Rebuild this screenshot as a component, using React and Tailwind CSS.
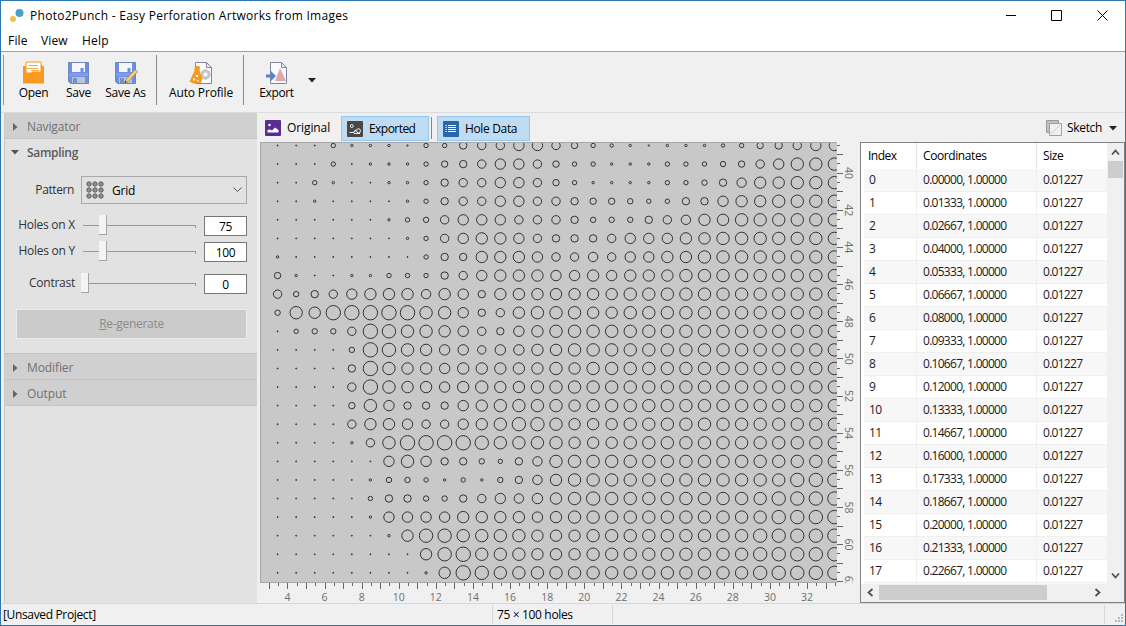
import React from "react";

const PITCH = 18.56;

// One character per hole: its diameter in pixels, in hexadecimal.
const HOLES = [
  "1115333255" + "899bb97543" + "23334578 9bb".replace(" ", ""),
  "1115133357" + "89bb975533" + "355567 9bddd".replace(" ", ""),
  "1153113358" + "99bb975333" + "35568accddd",
  "1131111358" + "99bb998776" + "5588bccdddd",
  "1111113569" + "bbb9998666" + "89accdddddd",
  "1111111359" + "bccb98889b" + "bbccddddddd",
  "3111111158" + "8cccb99a9b" + "bccdddddddd",
  "7311335558" + "9bcccbbcbc" + "ccddddddddd",
  "9689bcccac" + "b8cccccccd" + "ddddddddddd",
  "6dcfffffdd" + "b89cdddccd" + "ddddddddddd",
  "15669feddc" + "b98bcddddd" + "ddddddddddd",
  "11116fedcb" + "b9bbccdddd" + "ddddddddddd",
  "11118fdccb" + "cccccdcddd" + "ddddddddddd",
  "11119fdccb" + "cdccdddddd" + "ddddddddddd",
  "11117db888" + "bcddddcddd" + "ddddddddddd",
  "11119ccb99" + "bcdeedcccd" + "ddddddddddd",
  "111139dfff" + "feddddcccd" + "ddddddddddd",
  "111111bdb8" + "8658addddd" + "ddddddddddd",
  "1111136653" + "5368acdddd" + "ddddddddeee",
  "1111158866" + "89babcdedd" + "dddddddeeee",
  "111113bbbb" + "ccccbcdddd" + "dddddddeeee",
  "1111113cee" + "ddddcccddd" + "ddddddeeeee",
  "11111111ce" + "fdddcccddd" + "ddddddeeeee",
  "111111113c" + "fedddddddd" + "ddddddeeeee",
];

const radius = (c) => (c === "1" ? 0.5 : parseInt(c, 16) / 2 - 0.3);

function Canvas() {
  const xTicks = Array.from({ length: 62 }, (_, i) => 3 + i / 2);
  const yTicks = Array.from({ length: 48 }, (_, i) => 38.5 + i / 2);
  return (
    <svg width="600" height="461" viewBox="260 142 600 461" className="block">
      <defs>
        <clipPath id="sheet">
          <rect x="261" y="143" width="576" height="440" />
        </clipPath>
        <clipPath id="side">
          <rect x="837" y="142" width="23" height="441" />
        </clipPath>
      </defs>
      <rect x="260" y="142" width="577" height="441" fill="#a8a8a8" />
      <rect x="261" y="143" width="576" height="439" fill="#c8c8c8" />
      <g clipPath="url(#sheet)" fill="none" stroke="#333" strokeWidth="1">
        {HOLES.map((row, r) =>
          row.split("").map((c, i) => (
            <circle
              key={r + "-" + i}
              cx={277.6 + i * PITCH}
              cy={145.5 + r * 18.58}
              r={radius(c)}
              fill={c === "1" ? "#333" : "none"}
            />
          ))
        )}
      </g>
      <g fill="#666">
        {xTicks.map((v) => (
          <rect key={v} x={Math.round(287.4 + (v - 4) * PITCH)} y="583" width="1" height={v % 1 ? 3 : 6} />
        ))}
        {yTicks.map((v) => (
          <rect key={v} x="837" y={Math.round(172.6 + (v - 40) * 18.58)} width={v % 1 ? 3 : 6} height="1" />
        ))}
      </g>
      <g fill="#6e6e6e" fontFamily="'Open Sans', 'Noto Sans', sans-serif" fontSize="10.5" textAnchor="middle">
        {Array.from({ length: 15 }, (_, i) => 4 + i * 2).map((v) => (
          <text key={v} x={287.4 + (v - 4) * PITCH} y="601">{v}</text>
        ))}
        <g clipPath="url(#side)">
          {Array.from({ length: 12 }, (_, i) => 40 + i * 2).map((v) => (
            <text key={v} transform={`translate(845 ${173 + (v - 40) * 18.58}) rotate(90)`}>{v}</text>
          ))}
        </g>
      </g>
    </svg>
  );
}

const OpenIcon = () => (
  <svg width="24" height="24" viewBox="0 0 24 24">
    <path d="M1 5h3v-1h16v1h2v17H1z" fill="#f79a1e" />
    <path d="M4 1h15v11H4z" fill="#fff" stroke="#f79a1e" />
    <path d="M7 4.500h9M5 7.500h11" stroke="#f9a83c" strokeWidth="1.200" />
    <path d="M1 9h3v3h5l1.500-1.500H19V8h3v14.500H1z" fill="#f79a1e" />
    <path d="M9 9.500h8" stroke="#f9a83c" />
  </svg>
);

const Disk = () => (
  <>
    <path d="M1.500 1.500h20v21h-18l-2-2z" fill="#6f8fe0" stroke="#7088b8" />
    <path d="M5 2h13v9H5z" fill="#f4f7ff" />
    <path d="M13.500 7h3v4h-3z" fill="#6f8fe0" />
    <path d="M2 12h19v3H2z" fill="#809cea" />
    <path d="M5 16h13v6H5z" fill="#b9c4d8" />
    <path d="M6 17h4v5H6z" fill="#7890c8" />
  </>
);

const SaveIcon = () => (
  <svg width="24" height="24" viewBox="0 0 24 24"><Disk /></svg>
);

const SaveAsIcon = () => (
  <svg width="24" height="24" viewBox="0 0 24 24">
    <Disk />
    <path d="M10.500 22l2-4L21 8.500l2.500 2.200L14.500 20.500z" fill="#f6cf7d" stroke="#a08050" strokeWidth=".8" />
    <path d="M10.500 22l1-2.500 1.500 1.500z" fill="#444" />
  </svg>
);

const Page = () => (
  <path d="M6.500 1.500h11l5 5v16h-16z M17.500 1.500v5h5" fill="#fbfbff" stroke="#8088a0" />
);

const ProfileIcon = () => (
  <svg width="24" height="24" viewBox="0 0 24 24">
    <Page />
    <circle cx="16.500" cy="13.500" r="3.500" fill="none" stroke="#c4c6c8" strokeWidth="3" />
    <path d="M16.500 8v11M11 13.500h11M13 10l7 7M20 10l-7 7" stroke="#c4c6c8" strokeWidth="1.600" />
    <circle cx="16.500" cy="13.500" r="2" fill="#fff" />
    <path d="M5.500 7l1.500-2h3l1 1.500-.5 3 1.500 4 1.500 4.500-1.500 4-8 .5-3.500-2 3-6.500 2-4z" fill="#f79a1e" />
    <path d="M4 17.500h2v2H4zM7 14h2v2H7zM8 19h1.500v1.500H8z" fill="#fff" />
  </svg>
);

const ExportIcon = () => (
  <svg width="24" height="24" viewBox="0 0 24 24">
    <g transform="translate(-1 0)"><Page /></g>
    <path d="M15 7l6 13H10z" fill="#dfa9a9" />
    <path d="M1 13.500h5v-3.500l5 5-5 5v-3.500H1z" fill="#5b7fd6" />
  </svg>
);

const PictureIcon = () => (
  <svg width="16" height="16" viewBox="0 0 16 16">
    <rect width="16" height="16" rx="1" fill="#5a2d91" />
    <circle cx="4.500" cy="5" r="1.200" fill="#fff" />
    <path d="M2.500 12.500v-2.500l2.500-.5 2 1 3-3 3.500 2.500v2.500z" fill="#fff" />
  </svg>
);

const ExportedIcon = () => (
  <svg width="16" height="16" viewBox="0 0 16 16" fill="none" stroke="#eee">
    <rect width="16" height="16" rx="1" fill="#484848" stroke="none" />
    <circle cx="4.800" cy="5" r="1.500" />
    <circle cx="11.500" cy="9.800" r="2" />
    <path d="M2.500 11.500h4l2.500-2.500M7 12.500h6" strokeWidth="1.200" />
  </svg>
);

const ListIcon = () => (
  <svg width="16" height="16" viewBox="0 0 16 16">
    <rect width="16" height="16" rx="1" fill="#2b66ac" />
    <path d="M5 4.500h8M5 6.500h8M5 8.500h8M5 10.500h8M2.500 4.500h1.200M2.500 6.500h1.200M2.500 8.500h1.200M2.500 10.500h1.200" stroke="#fff" />
  </svg>
);

const Down = () => (
  <svg width="8" height="5" viewBox="0 0 8 5"><path d="M0 0h8L4 4.500z" fill="#222" /></svg>
);

const Tool = ({ icon, label, className }) => (
  <div className={"flex flex-col items-center " + className}>
    {icon}
    <span className="leading-4 whitespace-nowrap">{label}</span>
  </div>
);

const Section = ({ label }) => (
  <div className="flex h-[26px] items-center border-b border-[#c3c3c3] bg-[#d0d0d0] pt-[2px] pl-[8px] text-[#707070]">
    <svg width="5" height="8" viewBox="0 0 5 8"><path d="M0 0v8l4.500-4z" fill="#666" /></svg>
    <span className="ml-[9px] tracking-[-0.1px]">{label}</span>
  </div>
);

const SliderRow = ({ label, value, low, className }) => (
  <div className={"flex h-5 items-center " + className}>
    <span className="w-[70px] pb-[3px] text-right tracking-[-0.25px] text-[#333]">{label}</span>
    <div className={"flex h-5 items-center pb-[2px] " + (low ? "ml-[6px] w-[115px]" : "ml-[8px] w-[113px]")}>
      {!low && <div className="h-px w-[16px] bg-[#999]" />}
      <div className="h-5 w-2 border-r border-b border-[#a5a5a5] bg-[#f4f4f4]" />
      <div className="h-px flex-1 bg-[#999]" />
      <div className="mt-[2px] h-[3px] w-px bg-[#999]" />
    </div>
    <div className="ml-2 flex h-5 w-[43px] items-center justify-center border border-[#777] bg-white pt-px tracking-[-0.4px] text-black">{value}</div>
  </div>
);

const Chevron = ({ d }) => (
  <svg width="9" height="9" viewBox="0 0 9 9" fill="none" stroke="#505050" strokeWidth="1.800"><path d={d} /></svg>
);

const coordinate = (i) => (i / 75).toFixed(5) + ", 1.00000";

export default function App() {
  return (
    <div className="flex h-[626px] w-[1126px] flex-col overflow-hidden border border-[#2b78b4] bg-[#f0f0f0] font-['Open_Sans','Noto_Sans',sans-serif] text-[12px] leading-4 text-black">
      <div className="flex h-[29px] shrink-0 items-center bg-white pl-2">
        <svg width="16" height="16" viewBox="0 0 16 16">
          <circle cx="10.500" cy="5" r="4" fill="#4aa0c8" />
          <circle cx="4" cy="11" r="3" fill="#f2c14a" />
        </svg>
        <span className="ml-[5px] tracking-[0.28px] whitespace-nowrap">Photo2Punch - Easy Perforation Artworks from Images</span>
        <svg className="mr-[17px] ml-auto" width="102" height="11" viewBox="0 0 102 11" fill="none" stroke="#000">
          <path d="M0 5.500h10M45.500.5h10v10h-10zM91.500.5l10 10M101.500.5l-10 10" />
        </svg>
      </div>
      <div className="flex h-[21px] shrink-0 items-center bg-white pl-[7px]">
        <span className="w-[33px] tracking-[0.2px]">File</span>
        <span className="w-[41px] tracking-[0.1px]">View</span>
        <span className="tracking-[0.2px]">Help</span>
      </div>
      <div className="flex h-[61px] shrink-0 border-t border-[#a0a0a0] pt-[3px] pl-[2px]">
        <div className="h-[50px] w-px bg-[#999]" />
        <Tool icon={<OpenIcon />} label="Open" className="ml-[6px] w-[47px] pt-[6px] tracking-[-0.3px]" />
        <Tool icon={<SaveIcon />} label="Save" className="w-[43px] pt-[6px] tracking-[-0.2px]" />
        <Tool icon={<SaveAsIcon />} label="Save As" className="w-[51px] pt-[6px] tracking-[-0.3px]" />
        <div className="ml-[5px] h-[50px] w-px bg-[#888]" />
        <Tool icon={<ProfileIcon />} label="Auto Profile" className="ml-[10px] w-[68px] pt-[6px] tracking-[-0.15px]" />
        <div className="ml-[8px] h-[50px] w-px bg-[#888]" />
        <Tool icon={<ExportIcon />} label="Export" className="ml-[12px] w-[41px] pt-[6px] tracking-[-0.4px]" />
        <div className="mt-[23px] ml-[11px]"><Down /></div>
      </div>
      <div className="flex h-[491px] shrink-0 border-t border-[#dcdcdc]">
        <div className="ml-[3px] h-[490px] w-[253px] shrink-0 border-l border-[#c8c8c8] bg-[#e2e2e2]">
          <Section label="Navigator" />
          <div className="h-[215px] border-b border-[#c3c3c3]">
            <div className="flex h-[27px] items-center pl-[6px] text-[#5a5a5a]">
              <svg width="8" height="5" viewBox="0 0 8 5"><path d="M0 0h8L4 4.500z" fill="#555" /></svg>
              <span className="ml-[8px] font-semibold tracking-[-0.3px]">Sampling</span>
            </div>
            <div className="mt-[10px] flex items-center">
              <span className="w-[69px] text-right tracking-[-0.4px] text-[#333]">Pattern</span>
              <div className="ml-[7px] flex h-7 w-[166px] items-center border border-[#a8a8a8] pr-1 pl-[4px]">
                <svg width="18" height="18" viewBox="0 0 18 18" fill="#909090" stroke="#606060">
                  {[3, 9, 15].map((y) => [3, 9, 15].map((x) => <circle key={x + "-" + y} cx={x} cy={y} r="2.200" />))}
                </svg>
                <span className="ml-[8px] pt-px tracking-[-0.2px]">Grid</span>
                <svg className="ml-auto" width="9" height="6" viewBox="0 0 9 6" fill="none" stroke="#555"><path d="M.5.5l4 4 4-4" /></svg>
              </div>
            </div>
            <SliderRow label="Holes on X" value="75" className="mt-[12px]" />
            <SliderRow label="Holes on Y" value="100" className="mt-[6px]" />
            <SliderRow label="Contrast" value="0" low className="mt-[12px]" />
            <div className="mt-[15px] ml-[11px] flex h-[30px] w-[231px] items-center justify-center border border-[#ececec] bg-[#cbcbcb] tracking-[-0.3px] text-[#8a8a8a]">
              <span><u>R</u>e-generate</span>
            </div>
          </div>
          <Section label="Modifier" />
          <Section label="Output" />
        </div>
        <div className="ml-[3px] flex w-[600px] shrink-0 flex-col">
          <div className="flex h-[29px] shrink-0 items-center pt-[1px]">
            <div className="ml-[5px] flex w-[76px] items-center gap-[6px] tracking-[-0.1px]"><PictureIcon />Original</div>
            <div className="flex h-[25px] w-[88px] items-center gap-[6px] border border-[#95c8ee] bg-[#bfdcf3] pt-px pl-[5px] tracking-[-0.5px]"><ExportedIcon /><span className="tracking-[-0.55px]">Exported</span></div>
            <div className="ml-[2px] h-[22px] w-px bg-[#888]" />
            <div className="ml-[5px] flex h-[25px] w-[93px] items-center gap-[6px] border border-[#95c8ee] bg-[#bfdcf3] pt-px pl-[5px]"><ListIcon /><span className="tracking-[-0.35px]">Hole Data</span></div>
          </div>
          <Canvas />
        </div>
        <div className="flex w-[265px] shrink-0 flex-col">
          <div className="flex h-[29px] shrink-0 items-center justify-end pt-[1px] pr-[8px]">
            <svg width="16" height="16" viewBox="0 0 16 16">
              <path d="M.5.5h12v12H.5z" fill="#c0c0c0" stroke="#999" />
              <path d="M3.500 3.500h12v12h-12z" fill="#f0f0ee" stroke="#a0a0a0" />
              <path d="M5 14l9-9" stroke="#ccc" />
            </svg>
            <span className="mr-[7px] ml-[5px] tracking-[-0.35px]">Sketch</span>
            <Down />
          </div>
          <div className="flex h-[461px] w-[265px] flex-col border border-[#828282] bg-white">
            <div className="flex h-[441px] shrink-0">
              <div className="w-[246px] shrink-0 overflow-hidden pl-[3px]">
                <div className="flex h-[26px] items-center">
                  <div className="flex h-full w-[53px] items-center border-r border-[#e5e5e5] pl-[4px] tracking-[-0.5px]">Index</div>
                  <div className="flex h-full w-[120px] items-center border-r border-[#e5e5e5] pl-[6px] tracking-[-0.4px]">Coordinates</div>
                  <div className="pl-[6px] tracking-[-0.4px]">Size</div>
                </div>
                {Array.from({ length: 19 }, (_, i) => (
                  <div key={i} className={"flex h-[23px] items-center border-b border-[#efefef] text-[12px] tracking-[-0.72px] text-[#1a1a1a] " + (i % 2 ? "bg-white" : "bg-[#f7f7f7]")}>
                    <div className="flex h-full w-[53px] items-center border-r border-[#efefef] pl-[5px]">{i < 18 && i}</div>
                    <div className="flex h-full w-[120px] items-center border-r border-[#efefef] pl-[6px] whitespace-nowrap">{i < 18 && coordinate(i)}</div>
                    <div className="pl-[6px]">{i < 18 && "0.01227"}</div>
                  </div>
                ))}
              </div>
              <div className="flex w-[17px] flex-col items-center bg-[#f0f0f0]">
                <div className="flex h-[18px] items-center pt-px"><Chevron d="M1 6.500l3.500-4 3.500 4" /></div>
                <div className="h-[17px] w-[15px] bg-[#cdcdcd]" />
                <div className="mt-auto flex h-[17px] items-center"><Chevron d="M1 2.500l3.500 4 3.500-4" /></div>
              </div>
            </div>
            <div className="flex h-[18px] items-center bg-[#f0f0f0] pb-px">
              <div className="flex w-[18px] justify-center"><Chevron d="M6.500 1l-4 3.500 4 3.500" /></div>
              <div className="h-[15px] w-[168px] bg-[#cdcdcd]" />
              <div className="ml-[46px]"><Chevron d="M2.500 1l4 3.500-4 3.500" /></div>
            </div>
          </div>
        </div>
      </div>
      <div className="flex flex-1 items-center border-t border-[#d7d7d7] pl-[2px]">
        <span className="w-[489px] tracking-[-0.35px]">[Unsaved Project]</span>
        <div className="flex h-[19px] w-[121px] items-center border-x border-[#d7d7d7] pl-[4px] tracking-[-0.35px]">75 × 100 holes</div>
        <div className="ml-auto h-[19px] w-px bg-[#d7d7d7]" />
        <svg className="mt-[8px] mr-[1px] ml-[10px]" width="9" height="9" viewBox="0 0 9 9" fill="#b8b8b8">
          <path d="M6 0h2v2H6zM3 3h2v2H3zM6 3h2v2H6zM0 6h2v2H0zM3 6h2v2H3zM6 6h2v2H6z" />
        </svg>
      </div>
    </div>
  );
}
